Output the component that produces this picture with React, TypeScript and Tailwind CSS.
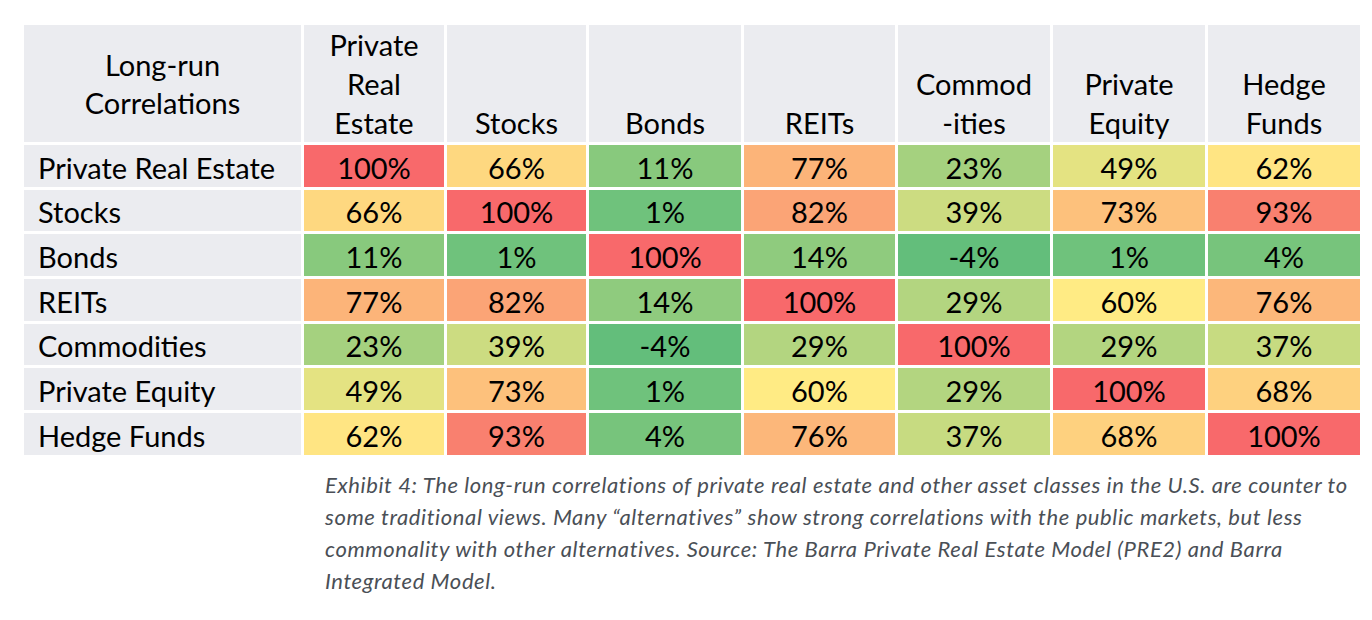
const cols = ['Private Real Estate', 'Stocks', 'Bonds', 'REITs', 'Commodities', 'Private Equity', 'Hedge Funds']

const data: number[][] = [
  [100, 66, 11, 77, 23, 49, 62],
  [66, 100, 1, 82, 39, 73, 93],
  [11, 1, 100, 14, -4, 1, 4],
  [77, 82, 14, 100, 29, 60, 76],
  [23, 39, -4, 29, 100, 29, 37],
  [49, 73, 1, 60, 29, 100, 68],
  [62, 93, 4, 76, 37, 68, 100],
]

// excel style 3-colour scale: min green, median yellow, max red
const GREEN = [99, 190, 123]
const YELLOW = [255, 235, 132]
const RED = [248, 105, 107]
const MIN = -4
const MID = 60
const MAX = 100

function mix(a: number[], b: number[], t: number) {
  const c = a.map((v, i) => Math.round(v + (b[i] - v) * t))
  return `rgb(${c[0]}, ${c[1]}, ${c[2]})`
}

function cellColor(v: number) {
  if (v <= MID) return mix(GREEN, YELLOW, (v - MIN) / (MID - MIN))
  return mix(YELLOW, RED, (v - MID) / (MAX - MID))
}

const headers: string[][] = [
  ['Private', 'Real', 'Estate'],
  ['Stocks'],
  ['Bonds'],
  ['REITs'],
  ['Commod', '-ities'],
  ['Private', 'Equity'],
  ['Hedge', 'Funds'],
]

export default function App() {
  return (
    <div className="w-[1372px] h-[620px] bg-white text-black overflow-hidden" style={{ fontFamily: 'Lato, "Open Sans", sans-serif' }}>
      <div className="ml-[24px] mt-[25px] grid grid-cols-[277px_140px_139px_152px_151px_152px_152px_152px] grid-rows-[117px_repeat(7,41.67px)] gap-[3px] w-max">
        <div className="bg-[#ebecf0] flex flex-col items-center justify-center text-[29px] leading-[38px]">
          <span>Long-run</span>
          <span>Correlations</span>
        </div>
        {headers.map((h, i) => (
          <div key={i} className="bg-[#ebecf0] flex flex-col items-center justify-end text-[29px] leading-[39px]">
            {h.map((line, j) => <span key={j}>{line}</span>)}
          </div>
        ))}
        {data.map((row, i) => (
          <>
            <div key={'l' + i} className="bg-[#ebecf0] flex items-center pl-[14px] pt-[3px] text-[29px] whitespace-nowrap">
              {cols[i]}
            </div>
            {row.map((v, j) => (
              <div key={i + '-' + j} className="flex items-center justify-center pt-[3px] text-[29px]" style={{ backgroundColor: cellColor(v) }}>
                {v}%
              </div>
            ))}
          </>
        ))}
      </div>
      <p className="ml-[325px] mt-[14px] text-[22px] leading-[32px] tracking-[0.6px] italic text-[#4a4f56] whitespace-nowrap">
        Exhibit 4: The long-run correlations of private real estate and other asset classes in the U.S. are counter to<br />
        some traditional views. Many “alternatives” show strong correlations with the public markets, but less<br />
        commonality with other alternatives. Source: The Barra Private Real Estate Model (PRE2) and Barra<br />
        Integrated Model.
      </p>
    </div>
  )
}
